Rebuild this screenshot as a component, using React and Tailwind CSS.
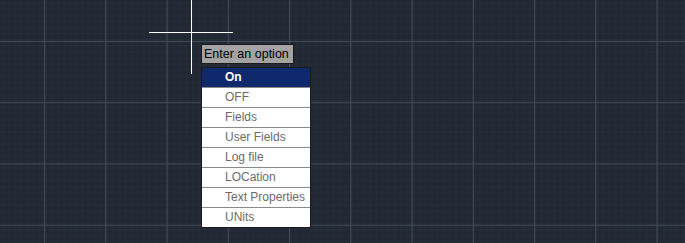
import React from "react";

const options = ["On", "OFF", "Fields", "User Fields", "Log file", "LOCation", "Text Properties", "UNits"];

// drafting grid behind everything
const Grid = () => (
  <svg className="absolute inset-0" width="685" height="243">
    <defs>
      <pattern id="minor" width="6.125" height="6.125" patternUnits="userSpaceOnUse" x="44" y="41">
        <path d="M0 0.5H6.125M0.5 0V6.125" stroke="#262d3a" strokeWidth="1" fill="none" />
      </pattern>
      <pattern id="major" width="61.25" height="61.25" patternUnits="userSpaceOnUse" x="44" y="41">
        <rect width="61.25" height="61.25" fill="url(#minor)" />
        <path d="M0 0.5H61.25M0.5 0V61.25" stroke="#434b5a" strokeWidth="1" fill="none" />
      </pattern>
    </defs>
    <rect width="685" height="243" fill="url(#major)" />
  </svg>
);

export default function App() {
  return (
    <div className="relative w-[685px] h-[243px] overflow-hidden bg-[#212833] font-['Liberation_Sans',sans-serif]">
      <Grid />
      {/* crosshair */}
      <div className="absolute left-[191px] top-0 w-px h-[74px] bg-white" />
      <div className="absolute left-[149px] top-[32px] w-[84px] h-px bg-white" />

      <div className="absolute left-[201px] top-[44px] flex flex-col items-start">
        <div className="h-[20px] w-[93px] whitespace-nowrap border border-[#1a1a1a] bg-[#a3a3a3] pl-[2px] text-[12.5px] leading-[18px] text-black">
          Enter an option
        </div>
        <ul className="mt-[3px] w-[110px] border border-[#1a1a1a] bg-white">
          {options.map((o, i) => (
            <li
              key={o}
              className={
                i === 0
                  ? "h-[19px] bg-[#10286c] pl-[23px] text-[12px] font-bold leading-[19px] text-white"
                  : "h-[20px] border-t border-[#8a8a8a] bg-white pl-[23px] text-[12px] leading-[19px] text-[#6b6b6b]"
              }
            >
              {o}
            </li>
          ))}
        </ul>
      </div>
    </div>
  );
}
